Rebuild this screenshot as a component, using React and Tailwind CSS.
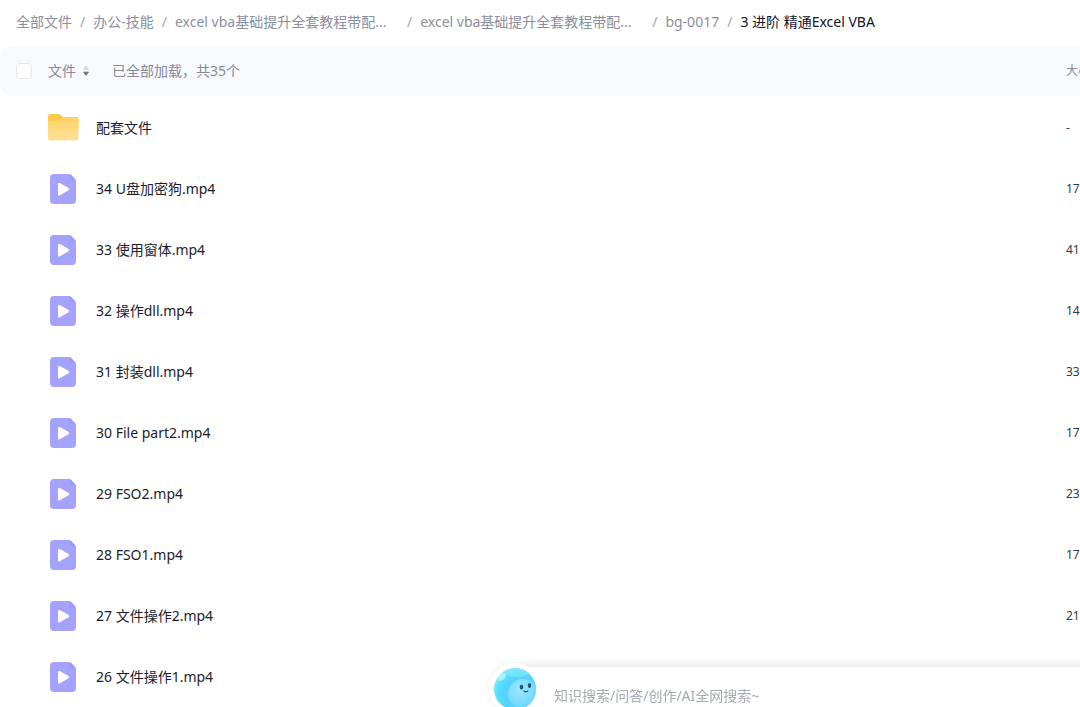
import { useState } from 'react';

const crumbs = [
  { label: '全部文件' },
  { label: '办公-技能' },
  { label: 'excel vba基础提升全套教程带配...', wide: true },
  { label: 'excel vba基础提升全套教程带配...', wide: true },
  { label: 'bg-0017' },
];

const files = [
  { name: '配套文件', type: 'folder', size: '-' },
  { name: '34 U盘加密狗.mp4', type: 'video', size: '17' },
  { name: '33 使用窗体.mp4', type: 'video', size: '41' },
  { name: '32 操作dll.mp4', type: 'video', size: '14' },
  { name: '31 封装dll.mp4', type: 'video', size: '33' },
  { name: '30 File part2.mp4', type: 'video', size: '17' },
  { name: '29 FSO2.mp4', type: 'video', size: '23' },
  { name: '28 FSO1.mp4', type: 'video', size: '17' },
  { name: '27 文件操作2.mp4', type: 'video', size: '21' },
  { name: '26 文件操作1.mp4', type: 'video', size: '17' },
];

function FolderIcon() {
  return (
    <svg viewBox="0 0 32 32" className="size-8 shrink-0" aria-hidden="true">
      <defs>
        <linearGradient id="folder-front" x1="0" y1="0" x2="0" y2="1">
          <stop offset="0" stopColor="#ffd264" />
          <stop offset="1" stopColor="#ffe09a" />
        </linearGradient>
      </defs>
      <path d="M1 4.500A2.500 2.500 0 0 1 3.500 2h7c1.500 0 2.300.5 3.200 1.300l1.500 1.200c.5.400 1 .5 1.600.5H29a2.500 2.500 0 0 1 2.500 2.500v8H1z" fill="#fdca45" />
      <path d="M1 8.500h9.500c1.200 0 2-.4 2.800-1.200l1.200-1.200c.6-.7 1.300-1.100 2.300-1.100H29a2.500 2.500 0 0 1 2.500 2.500V26a2.500 2.500 0 0 1-2.500 2.500H3.500A2.500 2.500 0 0 1 1 26z" fill="url(#folder-front)" />
    </svg>
  );
}

function VideoIcon() {
  return (
    <svg viewBox="0 0 32 32" className="size-8 shrink-0" aria-hidden="true">
      <path d="M7 1h14.500c1 0 1.900.4 2.600 1.100l3.800 3.900c.7.700 1.100 1.600 1.100 2.600V27a4 4 0 0 1-4 4H7a4 4 0 0 1-4-4V5a4 4 0 0 1 4-4z" fill="#a5a2fd" />
      <path d="M22.500 1.300c.6.100 1.100.4 1.600.8l3.800 3.900c.4.400.7.900.9 1.500h-3.800a2.500 2.500 0 0 1-2.500-2.500z" fill="#9c99fa" />
      <path d="M11 11.200c0-1 1-1.600 1.900-1.100l8.700 5c.9.500.9 1.700 0 2.200l-8.700 5c-.9.500-1.900-.1-1.900-1.100z" fill="#fff" />
    </svg>
  );
}

function SortIcon() {
  return (
    <svg viewBox="0 0 8 12" className="h-3 w-2" aria-hidden="true">
      <path d="M4 1.200 6.400 4.200H1.600z" fill="#d3d6dc" stroke="#d3d6dc" strokeLinejoin="round" />
      <path d="M1.600 7.200h4.800L4 10.400z" fill="#6d7484" stroke="#6d7484" strokeLinejoin="round" />
    </svg>
  );
}

function Mascot() {
  return (
    <svg viewBox="0 0 44 44" className="size-11" aria-hidden="true">
      <defs>
        <radialGradient id="mascot-body" cx="0.65" cy="0.65" r="0.72">
          <stop offset="0" stopColor="#5fd3fa" />
          <stop offset="0.55" stopColor="#55d2fb" />
          <stop offset="0.8" stopColor="#52e2fc" />
          <stop offset="1" stopColor="#8fe9fd" />
        </radialGradient>
        <radialGradient id="mascot-face" cx="0.4" cy="0.35" r="0.75">
          <stop offset="0" stopColor="#9be6fe" />
          <stop offset="0.6" stopColor="#7bdcfe" />
          <stop offset="1" stopColor="#4fcafb" />
        </radialGradient>
        <clipPath id="mascot-clip">
          <circle cx="22" cy="22" r="21" />
        </clipPath>
      </defs>
      <circle cx="22" cy="22" r="21" fill="url(#mascot-body)" />
      <g clipPath="url(#mascot-clip)">
        <circle cx="30" cy="27" r="15" fill="url(#mascot-face)" />
        <ellipse cx="9" cy="10" rx="5" ry="3" fill="#d6f8ff" opacity="0.6" transform="rotate(-42 9 10)" />
        <ellipse cx="24" cy="6" rx="11" ry="4" fill="#a5eafe" opacity="0.4" />
      </g>
      <ellipse cx="28.500" cy="20" rx="1.800" ry="2.500" fill="#24517c" />
      <ellipse cx="36.500" cy="18.500" rx="1.700" ry="2.500" fill="#24517c" />
      <path d="M31 24c1.200 1.300 3 1.200 3.900-.2" fill="none" stroke="#24517c" strokeWidth="1.200" strokeLinecap="round" />
    </svg>
  );
}

function Breadcrumb() {
  return (
    <nav aria-label="路径" className="h-[46px] px-4 pb-0.5 text-sm text-[#8a8f9e]">
      <ol className="flex h-full items-center gap-2 whitespace-nowrap">
        {crumbs.map((crumb, i) => (
          <li key={i} className="flex shrink-0 items-center gap-2">
            <a href="#" className={crumb.wide ? 'w-56' : ''}>{crumb.label}</a>
            <span className="text-[#a0a4b0]">/</span>
          </li>
        ))}
        <li className="shrink-0 text-[#11152b]" aria-current="page">3 进阶 精通Excel VBA</li>
      </ol>
    </nav>
  );
}

function FileTable() {
  const [checked, setChecked] = useState(false);

  return (
    <table className="w-[125%] table-fixed border-collapse text-left">
      <colgroup>
        <col className="w-12" />
        <col />
        <col className="w-[284px]" />
      </colgroup>
      <thead>
        <tr className="h-[50px] text-sm text-[#868b9a]">
          <th className="rounded-l-xl bg-[#f7f9fc] pl-4 font-normal">
            <input
              type="checkbox"
              aria-label="全选"
              checked={checked}
              onChange={(e) => setChecked(e.target.checked)}
              className="block size-4 appearance-none rounded-sm border border-[#e3e6ec] bg-white checked:bg-blue-500"
            />
          </th>
          <th className="bg-[#f7f9fc] font-normal">
            <div className="flex items-center gap-[22px]">
              <button type="button" className="flex items-center gap-1.5">
                文件
                <SortIcon />
              </button>
              <span>已全部加载，共35个</span>
            </div>
          </th>
          <th className="bg-[#f7f9fc] text-xs font-normal">大小</th>
        </tr>
      </thead>
      <tbody className="text-[#1a1d2e]">
        {files.map((file) => (
          <tr key={file.name} className="h-[61px]">
            <td></td>
            <td className="pt-0.5">
              <a href="#" className="-ml-px flex items-center gap-[17px] text-sm">
                {file.type === 'folder' ? <FolderIcon /> : <VideoIcon />}
                {file.name}
              </a>
            </td>
            <td className="pt-0.5 text-xs text-[#343849]">{file.size}</td>
          </tr>
        ))}
      </tbody>
    </table>
  );
}

function SearchBar() {
  return (
    <div className="fixed right-0 bottom-0 left-[489px] h-10">
      <div className="absolute -top-1 left-0 size-13 rounded-full bg-white shadow-[0_0_6px_rgba(0,0,0,0.08)]"></div>
      <div className="relative ml-6 flex h-full items-center bg-white pt-[18px] pl-[41px] shadow-[12px_-3px_10px_rgba(0,0,0,0.1)]">
        <input
          type="text"
          aria-label="搜索"
          placeholder="知识搜索/问答/创作/AI全网搜索~"
          className="w-full bg-transparent text-sm text-[#1a1d2e] outline-none placeholder:text-[#a5a9b8]"
        />
      </div>
      <div className="absolute -top-1 left-0 flex size-13 items-center justify-center rounded-full bg-white">
        <Mascot />
      </div>
    </div>
  );
}

export default function App() {
  return (
    <div className="h-screen overflow-hidden bg-white font-['Noto_Sans','Noto_Sans_CJK_SC',sans-serif]">
      <Breadcrumb />
      <FileTable />
      <SearchBar />
    </div>
  );
}
